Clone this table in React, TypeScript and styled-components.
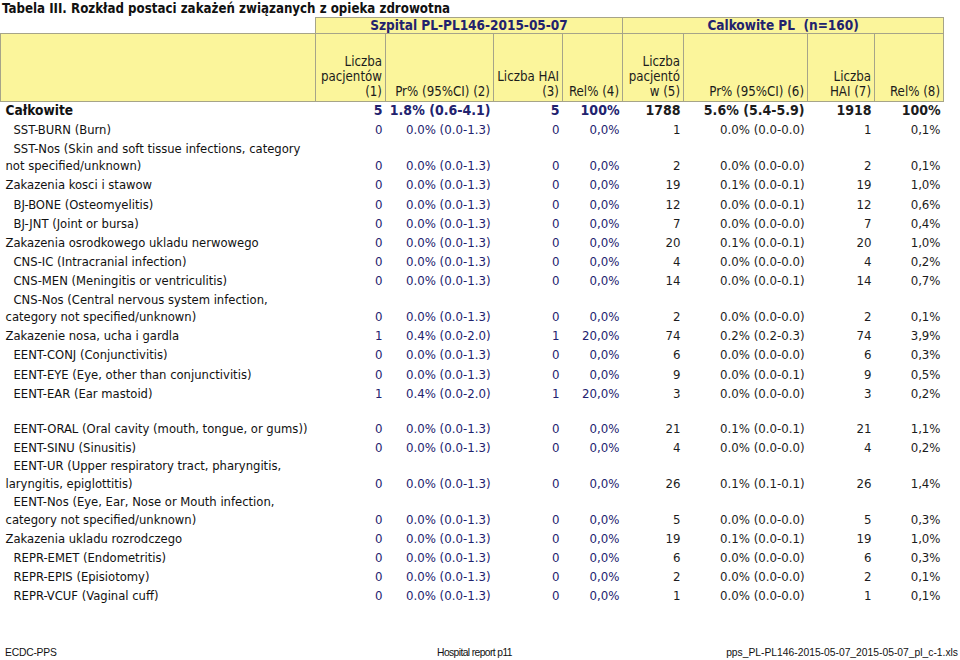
import React from "react";
import styled, { createGlobalStyle } from "styled-components";

const Global = createGlobalStyle`
  html, body { margin: 0; padding: 0; background: #ffffff; }
  body { font-family: "DejaVu Sans Condensed", "DejaVu Sans", sans-serif; color: #1a1a1a; }
`;

const NAVY = "#22226e";
const INK = "#1c1c1c";
const GRID = "#a6a489";
const YELLOW = "#fbf59b";

const Page = styled.div`
  width: 960px;
  height: 660px;
  display: flex;
  flex-direction: column;
  overflow: hidden;
`;

const Title = styled.h1`
  margin: 0;
  padding-left: 2px;
  height: 17px;
  line-height: 17px;
  font-size: 13.2px;
  font-weight: bold;
  color: #111;
  white-space: nowrap;
`;

const Table = styled.table`
  border-collapse: collapse;
  table-layout: fixed;
  width: 943px;
`;

const BlankCorner = styled.th`
  border: none;
  padding: 0;
  height: 15px;
`;

const GroupHead = styled.th`
  background: ${YELLOW};
  border: 1px solid ${GRID};
  color: ${NAVY};
  font-size: 13.5px;
  font-weight: bold;
  text-align: center;
  white-space: pre;
  padding: 0;
  height: 15px;
  line-height: 15px;
`;

const ColHead = styled.th`
  background: ${YELLOW};
  border: 1px solid ${GRID};
  color: ${INK};
  font-size: 13.2px;
  font-weight: normal;
  text-align: right;
  vertical-align: bottom;
  line-height: 15px;
  padding: 0 3px 2px 0;
  height: 65px;
  white-space: nowrap;
`;

const Row = styled.tr<{ $h: number }>`
  height: ${(p) => p.$h}px;
`;

const Label = styled.td<{ $kind: string }>`
  vertical-align: bottom;
  padding: 0 0 1px 5px;
  line-height: 17.5px;
  font-size: ${(p) => (p.$kind === "total" ? "13.6px" : "12.9px")};
  font-weight: ${(p) => (p.$kind === "total" ? "bold" : "normal")};
  color: #111;
  white-space: nowrap;
  overflow: hidden;
`;

const Indent = styled.span<{ $on: boolean }>`
  display: inline-block;
  width: ${(p) => (p.$on ? "8px" : "0")};
`;

const Val = styled.td<{ $navy: boolean; $bold: boolean }>`
  vertical-align: bottom;
  text-align: right;
  padding: 0 3px 1px 0;
  line-height: 17.5px;
  font-size: ${(p) => (p.$bold ? "14px" : "13.1px")};
  font-weight: ${(p) => (p.$bold ? "bold" : "normal")};
  color: ${(p) => (p.$navy ? NAVY : INK)};
  white-space: nowrap;
`;

const Footer = styled.div`
  margin-top: auto;
  height: 15px;
  display: grid;
  grid-template-columns: 1fr 1fr 1fr;
  align-items: center;
  padding: 0 2px 0 5px;
  font-family: "Liberation Sans Narrow", "Liberation Sans", sans-serif;
  font-size: 10.3px;
  color: #111;
`;

const FootLeft = styled.span`
  justify-self: start;
  letter-spacing: -0.2px;
`;
const FootMid = styled.span`
  justify-self: center;
  margin-right: 14px;
  letter-spacing: -0.6px;
`;
const FootRight = styled.span`
  justify-self: end;
`;

type Kind = "total" | "cat" | "sub" | "gap";
type R = { lines: string[]; kind: Kind; v: string[] };

const Z = ["0", "0.0% (0.0-1.3)", "0", "0,0%"];

const rows: R[] = [
  { lines: ["Całkowite"], kind: "total", v: ["5", "1.8% (0.6-4.1)", "5", "100%", "1788", "5.6% (5.4-5.9)", "1918", "100%"] },
  { lines: ["SST-BURN (Burn)"], kind: "sub", v: [...Z, "1", "0.0% (0.0-0.0)", "1", "0,1%"] },
  { lines: ["SST-Nos (Skin and soft tissue infections, category", "not specified/unknown)"], kind: "sub", v: [...Z, "2", "0.0% (0.0-0.0)", "2", "0,1%"] },
  { lines: ["Zakazenia kosci i stawow"], kind: "cat", v: [...Z, "19", "0.1% (0.0-0.1)", "19", "1,0%"] },
  { lines: ["BJ-BONE (Osteomyelitis)"], kind: "sub", v: [...Z, "12", "0.0% (0.0-0.1)", "12", "0,6%"] },
  { lines: ["BJ-JNT (Joint or bursa)"], kind: "sub", v: [...Z, "7", "0.0% (0.0-0.0)", "7", "0,4%"] },
  { lines: ["Zakazenia osrodkowego ukladu nerwowego"], kind: "cat", v: [...Z, "20", "0.1% (0.0-0.1)", "20", "1,0%"] },
  { lines: ["CNS-IC (Intracranial infection)"], kind: "sub", v: [...Z, "4", "0.0% (0.0-0.0)", "4", "0,2%"] },
  { lines: ["CNS-MEN (Meningitis or ventriculitis)"], kind: "sub", v: [...Z, "14", "0.0% (0.0-0.1)", "14", "0,7%"] },
  { lines: ["CNS-Nos (Central nervous system infection,", "category not specified/unknown)"], kind: "sub", v: [...Z, "2", "0.0% (0.0-0.0)", "2", "0,1%"] },
  { lines: ["Zakazenie nosa, ucha i gardla"], kind: "cat", v: ["1", "0.4% (0.0-2.0)", "1", "20,0%", "74", "0.2% (0.2-0.3)", "74", "3,9%"] },
  { lines: ["EENT-CONJ (Conjunctivitis)"], kind: "sub", v: [...Z, "6", "0.0% (0.0-0.0)", "6", "0,3%"] },
  { lines: ["EENT-EYE (Eye, other than conjunctivitis)"], kind: "sub", v: [...Z, "9", "0.0% (0.0-0.1)", "9", "0,5%"] },
  { lines: ["EENT-EAR (Ear mastoid)"], kind: "sub", v: ["1", "0.4% (0.0-2.0)", "1", "20,0%", "3", "0.0% (0.0-0.0)", "3", "0,2%"] },
  { lines: [], kind: "gap", v: [] },
  { lines: ["EENT-ORAL (Oral cavity (mouth, tongue, or gums))"], kind: "sub", v: [...Z, "21", "0.1% (0.0-0.1)", "21", "1,1%"] },
  { lines: ["EENT-SINU (Sinusitis)"], kind: "sub", v: [...Z, "4", "0.0% (0.0-0.0)", "4", "0,2%"] },
  { lines: ["EENT-UR (Upper respiratory tract, pharyngitis,", "laryngitis, epiglottitis)"], kind: "sub", v: [...Z, "26", "0.1% (0.1-0.1)", "26", "1,4%"] },
  { lines: ["EENT-Nos (Eye, Ear, Nose or Mouth infection,", "category not specified/unknown)"], kind: "sub", v: [...Z, "5", "0.0% (0.0-0.0)", "5", "0,3%"] },
  { lines: ["Zakazenia ukladu rozrodczego"], kind: "cat", v: [...Z, "19", "0.1% (0.0-0.1)", "19", "1,0%"] },
  { lines: ["REPR-EMET (Endometritis)"], kind: "sub", v: [...Z, "6", "0.0% (0.0-0.0)", "6", "0,3%"] },
  { lines: ["REPR-EPIS (Episiotomy)"], kind: "sub", v: [...Z, "2", "0.0% (0.0-0.0)", "2", "0,1%"] },
  { lines: ["REPR-VCUF (Vaginal cuff)"], kind: "sub", v: [...Z, "1", "0.0% (0.0-0.0)", "1", "0,1%"] },
];

const widths = [315, 70, 108, 69, 60, 61, 124, 67, 69];

const heads: string[][] = [
  ["Liczba", "pacjentów", "(1)"],
  ["Pr% (95%CI) (2)"],
  ["Liczba HAI", "(3)"],
  ["Rel% (4)"],
  ["Liczba", "pacjentó", "w (5)"],
  ["Pr% (95%CI) (6)"],
  ["Liczba", "HAI (7)"],
  ["Rel% (8)"],
];

function rowHeight(r: R): number {
  if (r.kind === "gap") return 15.8;
  return r.lines.length > 1 ? 35.2 : 19.15;
}

export default function App() {
  return (
    <Page>
      <Global />
      <Title>Tabela III. Rozkład postaci zakażeń związanych z opieka zdrowotna</Title>
      <Table>
        <colgroup>
          {widths.map((w, i) => (
            <col key={i} style={{ width: w }} />
          ))}
        </colgroup>
        <thead>
          <tr>
            <BlankCorner />
            <GroupHead colSpan={4}>Szpital PL-PL146-2015-05-07</GroupHead>
            <GroupHead colSpan={4}>{"Calkowite PL  (n=160)"}</GroupHead>
          </tr>
          <tr>
            <ColHead />
            {heads.map((h, i) => (
              <ColHead key={i}>
                {h.map((l, j) => (
                  <React.Fragment key={j}>
                    {j > 0 && <br />}
                    {l}
                  </React.Fragment>
                ))}
              </ColHead>
            ))}
          </tr>
        </thead>
        <tbody>
          {rows.map((r, i) => (
            <Row key={i} $h={rowHeight(r)}>
              {r.kind === "gap" ? (
                <td colSpan={9} />
              ) : (
                <>
                  <Label $kind={r.kind}>
                    {r.lines.map((l, j) => (
                      <React.Fragment key={j}>
                        {j > 0 && <br />}
                        <Indent $on={j === 0 && r.kind === "sub"} />
                        {l}
                      </React.Fragment>
                    ))}
                  </Label>
                  {r.v.map((v, j) => (
                    <Val key={j} $navy={j < 4} $bold={r.kind === "total"}>
                      {v}
                    </Val>
                  ))}
                </>
              )}
            </Row>
          ))}
        </tbody>
      </Table>
      <Footer>
        <FootLeft>ECDC-PPS</FootLeft>
        <FootMid>Hospital report p11</FootMid>
        <FootRight>pps_PL-PL146-2015-05-07_2015-05-07_pl_c-1.xls</FootRight>
      </Footer>
    </Page>
  );
}
